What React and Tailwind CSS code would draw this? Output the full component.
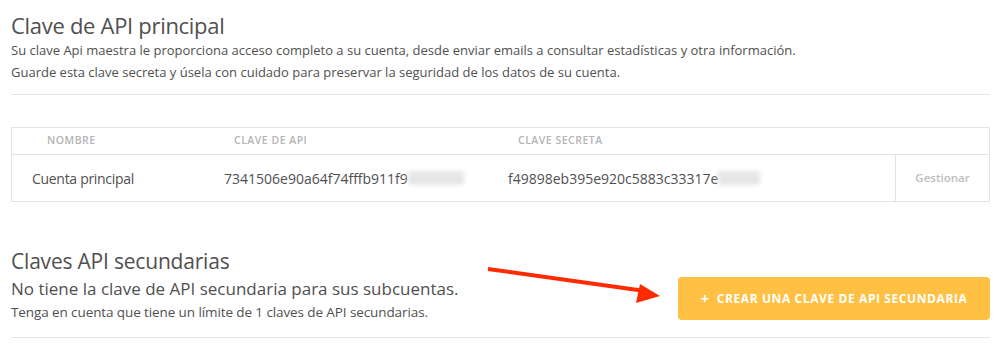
export default function App() {
    const font = { fontFamily: '"Open Sans", "Liberation Sans", sans-serif' };

    return (
        <div className="w-[1004px] h-[361px] bg-white text-[#505050] relative overflow-hidden" style={font}>
            <div className="pl-[11px] pr-[14px] pt-[11px]">
                {/* Main key */}
                <h1 className="text-[22px] leading-[28px] tracking-[-0.3px]">Clave de API principal</h1>
                <p className="text-[13px] leading-[22px]">
                    Su clave Api maestra le proporciona acceso completo a su cuenta, desde enviar emails a consultar estadísticas y otra información.
                    <br />
                    Guarde esta clave secreta y úsela con cuidado para preservar la seguridad de los datos de su cuenta.
                </p>
                <div className="mt-[11px] border-t border-[#e3e3e3]" />

                <div className="mt-[32px] border border-[#e3e3e3] w-[979px]">
                    <div className="flex h-[27px] items-center text-[10.5px] tracking-[0.5px] font-semibold uppercase text-[#b4b4b4] border-b border-[#e3e3e3]">
                        <div className="w-[222px] pl-[35px]">Nombre</div>
                        <div className="w-[284px]">Clave de API</div>
                        <div>Clave secreta</div>
                    </div>
                    <div className="flex h-[46px] items-center text-[14px]">
                        <div className="w-[212px] pl-[20px] tracking-[-0.3px]">Cuenta principal</div>
                        <div className="w-[284px] flex items-center">
                            7341506e90a64f74fffb911f9
                            <span className="inline-block w-[56px] h-[14px] bg-[#e6e6e6] blur-[2px]" />
                        </div>
                        <div className="w-[387px] flex items-center">
                            f49898eb395e920c5883c33317e
                            <span className="inline-block w-[42px] h-[14px] bg-[#e6e6e6] blur-[2px]" />
                        </div>
                        <div className="flex-1 h-full border-l border-[#e3e3e3] flex items-center justify-center text-[11.5px] font-semibold text-[#bdbdbd]">
                            Gestionar
                        </div>
                    </div>
                </div>

                {/* Secondary keys */}
                <div className="mt-[46px] flex items-end justify-between w-[979px]">
                    <div>
                        <h2 className="text-[21px] leading-[26px] tracking-[-0.2px]">Claves API secundarias</h2>
                        <p className="text-[17px] leading-[22px] mt-[4px]">No tiene la clave de API secundaria para sus subcuentas.</p>
                        <p className="text-[13.5px] leading-[18px] tracking-[-0.1px] mt-[3px]">Tenga en cuenta que tiene un límite de 1 claves de API secundarias.</p>
                    </div>
                    <button className="mb-[1px] w-[312px] h-[43px] rounded-[4px] bg-[#ffc043] text-white text-[12px] font-bold uppercase tracking-[0.6px] flex items-center justify-center gap-[7px]">
                        <span className="text-[15px] font-bold leading-none">+</span>
                        Crear una clave de API secundaria
                    </button>
                </div>
                <div className="mt-[16px] border-t border-[#e3e3e3] w-[979px]" />
            </div>

            {/* annotation arrow */}
            <svg className="absolute left-0 top-0 pointer-events-none" width="1004" height="361">
                <line x1="488" y1="269" x2="645" y2="291" stroke="#ff2a00" strokeWidth="4" />
                <polygon points="660,296 640,284 636,303" fill="#ff2a00" />
            </svg>
        </div>
    );
}
